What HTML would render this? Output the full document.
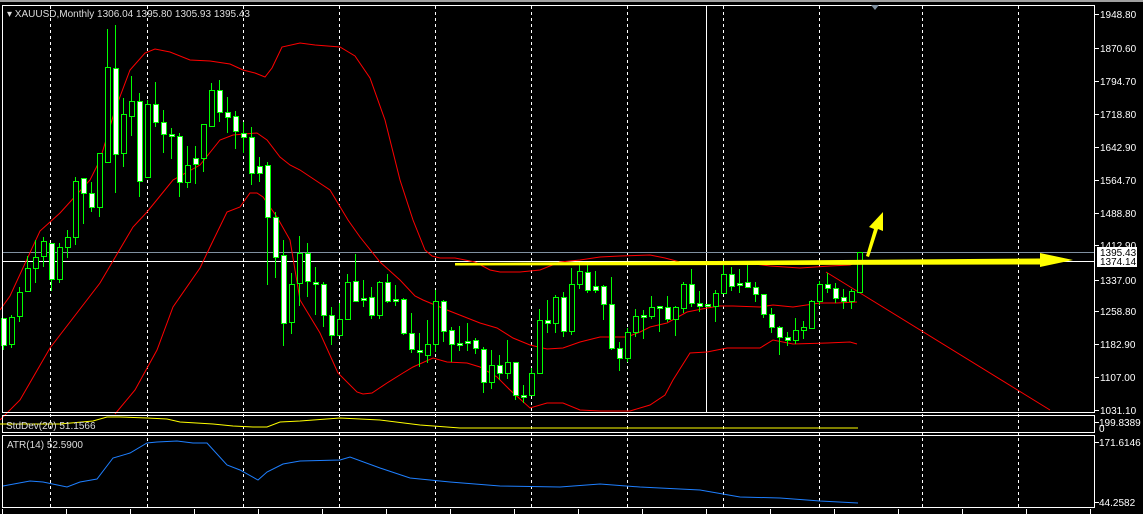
<!DOCTYPE html>
<html><head><meta charset="utf-8"><style>
html,body{margin:0;padding:0;background:#000;width:1143px;height:514px;overflow:hidden}
svg{display:block}
text{font-family:"Liberation Sans",sans-serif;font-size:10px;fill:#fff}
</style></head><body>
<svg id="s" width="1143" height="514" xmlns="http://www.w3.org/2000/svg">
<rect x="0" y="0" width="1143" height="514" fill="#000"/>
<rect x="0" y="0" width="1143" height="2" fill="#a0a0a0"/>
<g id="grid" stroke="#fff" stroke-width="1" stroke-dasharray="3,3" shape-rendering="crispEdges"></g>
<line x1="706.5" y1="6" x2="706.5" y2="413" stroke="#fff" stroke-width="1"/>
<line x1="2" y1="252.5" x2="1095" y2="252.5" stroke="#8090a0" stroke-width="1"/>
<line x1="2" y1="261.5" x2="1095" y2="261.5" stroke="#fff" stroke-width="1"/>
<g fill="none" stroke="#f00" stroke-width="1">
<polyline points="0,310 10,296 40,231 60,213 90,180 100,160 115,110 130,70 145,53 155,49 170,52 190,60 210,61 230,64 243,70 255,73 265,77 272,68 282,47 300,43 315,45 340,47 355,56 370,78 385,120 400,180 413,220 425,250 432,256 440,258 455,258 465,260 475,262 490,270 500,272 520,272 540,270 560,262 580,260 600,257 620,256 650,255 665,258 680,262 720,262 740,262 770,266 800,268 830,266 850,265 858,262"/>
<polyline points="0,420 20,400 50,348 100,283 133,227 147,212 173,180 200,165 220,140 233,135 257,133 267,140 280,157 290,165 300,170 330,190 348,220 360,237 380,262 400,280 415,296 423,300 447,310 480,323 497,328 513,338 530,345 547,349 563,348 580,342 600,337 627,337 640,332 650,327 667,323 687,312 707,308 720,306 733,306 760,307 773,305 793,307 820,303 837,303 857,302"/>
<polyline points="115,414 135,390 157,350 173,307 200,268 210,247 227,212 240,207 250,193 257,193 263,197 277,217 290,240 300,300 320,333 338,373 357,392 363,394 372,393 387,383 403,373 413,367 433,358 447,362 467,363 480,367 497,377 510,390 530,408 547,403 563,403 580,410 600,411 630,411 650,405 665,395 673,380 690,353 707,352 727,348 760,348 773,340 793,344 827,343 850,342 857,344"/>
<line x1="826" y1="272" x2="1050" y2="410"/>
</g>
<g id="candles" shape-rendering="crispEdges"></g>
<polygon points="455,263 1040,258.5 1040,253 1073,260 1040,267 1040,264.5 455,265.5" fill="#ff0"/>
<polygon points="866,256 874,229 869,227 883,212 883,231 878,229 869,257" fill="#ff0"/>
<g fill="none" stroke="#fff" stroke-width="1" shape-rendering="crispEdges">
<rect x="2.5" y="5.5" width="1092" height="407"/>
<rect x="2.5" y="415.5" width="1092" height="17"/>
<rect x="2.5" y="435.5" width="1092" height="72"/>
</g>
<polygon points="871,5 879,5 875,10" fill="#8090a0"/>
<polyline fill="none" stroke="#ff0" stroke-width="1" points="0,424 60,424 93,421 107,417 120,417 147,418 167,419 180,422 213,424 233,426 253,427 267,427 280,422 300,421 340,418 380,420 420,425 460,428 520,428 600,428 700,428 760,428 858,428"/>
<polyline fill="none" stroke="#1e7fff" stroke-width="1" points="3,486 30,481 43,482 67,487 80,482 97,479 113,458 130,453 147,443 157,442 177,441 193,443 207,443 227,465 240,470 258,480 267,472 283,464 300,461 340,460 350,457 380,468 410,478 450,482 500,486 560,487 600,484 640,487 700,490 740,497 780,498 820,501 858,503"/>
<g id="ticks" stroke="#fff" stroke-width="1" shape-rendering="crispEdges"></g>
<text x="7" y="17" style="fill:#ddd">▾ XAUUSD,Monthly  1306.04 1395.80 1305.93 1395.43</text>
<text x="6" y="429" style="fill:#ddd">StdDev(20) 51.1566</text>
<text x="7" y="448" style="fill:#ddd">ATR(14) 52.5900</text>
<g>
<text x="1100" y="18">1948.80</text>
<text x="1100" y="52">1870.60</text>
<text x="1100" y="85">1794.70</text>
<text x="1100" y="118">1718.80</text>
<text x="1100" y="151">1642.90</text>
<text x="1100" y="184">1564.70</text>
<text x="1100" y="217">1488.80</text>
<text x="1100" y="249">1412.90</text>
<rect x="1097" y="247" width="40" height="10" fill="#fff"/>
<text x="1100" y="256" style="fill:#000">1395.43</text>
<rect x="1097" y="257" width="40" height="10" fill="#fff"/>
<text x="1100" y="265" style="fill:#000">1374.14</text>
<text x="1100" y="284">1337.00</text>
<text x="1100" y="315">1258.80</text>
<text x="1100" y="348">1182.90</text>
<text x="1100" y="381">1107.00</text>
<text x="1100" y="414">1031.10</text>
<text x="1099" y="426">199.8389</text>
<text x="1099" y="432">0</text>
<text x="1099" y="446">171.6146</text>
<text x="1099" y="506">44.2582</text>
</g>
</svg>
<script>
var NS="http://www.w3.org/2000/svg";
function el(p,n,a){var e=document.createElementNS(NS,n);for(var k in a)e.setAttribute(k,a[k]);p.appendChild(e);return e;}
var g=document.getElementById("grid");
[50,147,243,339,435,531,627,723,819,922,1018].forEach(function(x){el(g,"line",{x1:x+.5,y1:6,x2:x+.5,y2:508});});
var d=[[318,345,318,350,1],[317,344,315,348,0],[292,316,287,322,0],[268,291,256,291,0],[257,268,240,283,0],[241,256,237,267,0],[243,279,243,291,1],[247,279,243,283,0],[237,247,230,258,0],[181,237,177,245,0],[178,193,178,224,1],[193,207,182,212,1],[153,207,153,217,0],[67,162,29,162,0],[68,154,25,193,1],[114,153,98,167,0],[101,116,76,136,0],[101,181,93,197,1],[104,177,100,177,0],[104,122,82,127,1],[122,134,110,153,1],[134,136,128,159,1],[136,182,133,197,1],[165,182,146,188,0],[158,164,146,184,1],[124,158,124,172,0],[90,126,83,126,0],[90,112,80,122,1],[112,117,97,133,1],[116,131,111,149,1],[133,137,122,153,1],[137,173,127,185,1],[166,173,157,182,1],[165,217,162,285,1],[217,257,212,278,1],[255,323,240,346,1],[284,322,273,334,0],[253,283,236,306,0],[253,281,243,297,1],[282,284,267,315,1],[284,315,282,327,1],[315,335,307,345,1],[319,335,303,335,0],[282,319,274,319,0],[281,301,254,301,1],[298,300,280,307,1],[297,315,287,319,1],[282,315,281,319,0],[282,301,274,303,1],[299,301,285,306,1],[299,333,298,335,1],[333,349,313,353,1],[350,352,333,367,1],[344,355,320,363,0],[301,344,290,352,0],[301,331,300,342,1],[330,344,327,362,1],[343,345,326,351,1],[341,343,323,351,1],[340,348,338,354,1],[349,382,347,393,1],[365,382,350,389,0],[365,373,355,380,1],[362,373,340,379,0],[362,395,362,400,1],[395,397,385,403,1],[373,395,368,395,0],[320,373,309,373,0],[320,323,300,333,1],[297,323,295,333,0],[297,331,292,337,1],[284,331,268,335,0],[271,284,262,289,0],[272,290,265,293,1],[286,290,271,293,1],[286,304,285,320,1],[304,348,277,350,1],[348,358,342,371,1],[332,358,328,362,0],[316,332,309,337,0],[315,317,310,339,1],[307,316,296,319,0],[306,308,306,332,1],[307,319,296,322,1],[307,319,306,336,0],[284,308,282,313,0],[284,303,269,307,1],[303,306,291,312,1],[304,306,304,307,1],[293,306,290,322,0],[274,293,263,293,0],[274,286,267,291,1],[283,285,269,293,1],[282,287,265,288,1],[287,294,282,302,1],[294,314,294,318,1],[314,327,308,333,1],[327,337,326,355,1],[337,340,332,346,1],[330,340,318,344,0],[327,330,321,339,0],[301,328,300,328,0],[284,301,281,305,0],[284,288,273,293,1],[288,298,283,303,1],[297,301,289,309,1],[291,301,289,309,0],[252,292,252,292,0]];
var c=document.getElementById("candles");
d.forEach(function(v,i){var x=Math.round(2.5+8*i);
el(c,"line",{x1:x+.5,y1:v[2],x2:x+.5,y2:v[3],stroke:"#0f0"});
el(c,"rect",{x:x-2+.5,y:v[0]+.5,width:5,height:Math.max(1,v[1]-v[0]),fill:v[4]?"#fff":"#000",stroke:"#0f0"});});
var t=document.getElementById("ticks");
[14,48,81,114,147,180,213,245,280,311,344,377,410,422,442,502].forEach(function(y){el(t,"line",{x1:1095,y1:y+.5,x2:1099,y2:y+.5});});
for(var x=2;x<1095;x+=64){el(t,"line",{x1:x+.5,y1:509,x2:x+.5,y2:514});}
</script>
</body></html>
